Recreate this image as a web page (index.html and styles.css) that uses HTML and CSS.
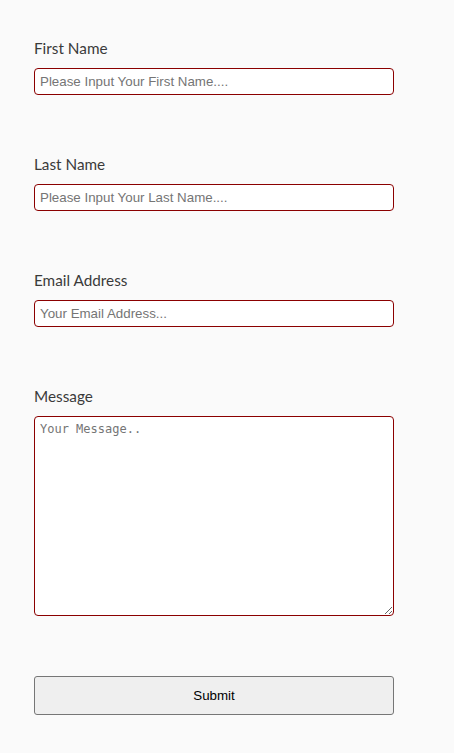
FILE: index.html
```html
<!DOCTYPE html>
<html lang="en">
<head>
<meta charset="utf-8">
<title>Contact Form</title>
<link rel="stylesheet" href="styles.css">
</head>
<body>
<form class="form">
  <div class="field">
    <label class="label" for="fn">First Name</label>
    <input class="input" id="fn" type="text" placeholder="Please Input Your First Name....">
  </div>
  <div class="field">
    <label class="label" for="ln">Last Name</label>
    <input class="input" id="ln" type="text" placeholder="Please Input Your Last Name....">
  </div>
  <div class="field">
    <label class="label" for="em">Email Address</label>
    <input class="input" id="em" type="email" placeholder="Your Email Address...">
  </div>
  <div class="field">
    <label class="label" for="msg">Message</label>
    <textarea class="textarea" id="msg" placeholder="Your Message.."></textarea>
  </div>
  <button class="submit" type="button">Submit</button>
</form>
</body>
</html>
```
FILE: styles.css
```css
html, body {
  margin: 0;
  padding: 0;
  background: #fafafa;
}
.form {
  display: flex;
  flex-direction: column;
  width: 360px;
  padding: 38px 0 0 34px;
}
.field {
  display: flex;
  flex-direction: column;
  gap: 10px;
  margin-bottom: 59px;
}
.label {
  font-family: Lato, "Open Sans", sans-serif;
  font-size: 15.3px;
  line-height: 20px;
  color: #3a3a3a;
}
.input, .textarea {
  box-sizing: border-box;
  width: 360px;
  border: 1px solid #8b0000;
  border-radius: 4px;
  background: #fff;
  margin: 0;
  outline: none;
}
.input {
  height: 27px;
  padding: 0 5px;
  font-family: "Liberation Sans", Arial, sans-serif;
  font-size: 13.33px;
  color: #333;
}
.input::placeholder {
  color: #757575;
}
.textarea {
  height: 200px;
  padding: 5px;
  font-family: "DejaVu Sans Mono", monospace;
  font-size: 12px;
  resize: vertical;
  display: block;
}
.textarea::placeholder {
  color: #757575;
}
.submit {
  box-sizing: border-box;
  width: 360px;
  height: 39px;
  border: 1px solid #767676;
  border-radius: 3px;
  background: #efefef;
  font-family: "Liberation Sans", Arial, sans-serif;
  font-size: 13.33px;
  color: #000;
  margin-top: 1px;
}
```
